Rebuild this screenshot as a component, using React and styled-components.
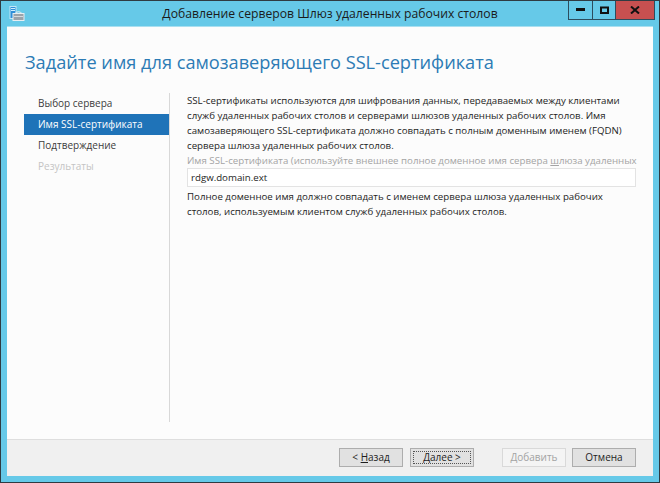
import React from "react";
import styled, { createGlobalStyle } from "styled-components";

const Global = createGlobalStyle`
  html, body { margin: 0; padding: 0; background: #ffffff; }
  body { font-family: "Open Sans", "Noto Sans", "Liberation Sans", sans-serif; }
  * { box-sizing: border-box; }
`;

const Window = styled.div`
  width: 660px;
  height: 483px;
  border: 1px solid #2f3b42;
  background: #66c9e8;
  display: flex;
  flex-direction: column;
  padding: 0 6px 6px 6px;
`;

const TitleBar = styled.div`
  height: 25px;
  display: grid;
  grid-template-columns: 1fr auto 1fr;
  align-items: start;
`;

const IconCell = styled.div`
  display: flex;
  align-items: center;
  height: 25px;
  padding-left: 2px;
`;

const Title = styled.div`
  font-size: 12.2px;
  color: #1b1b1b;
  line-height: 25px;
  white-space: nowrap;
`;

const Controls = styled.div`
  display: flex;
  justify-content: flex-end;
  margin-right: -2px;
`;

const CtrlBtn = styled.div`
  width: ${(p) => p.$w}px;
  height: 19px;
  border: 1px solid #2c4d5e;
  border-top: none;
  margin-left: -1px;
  background: ${(p) => (p.$close ? "#c75050" : "transparent")};
  display: flex;
  align-items: center;
  justify-content: center;
`;

const Client = styled.div`
  flex: 1;
  min-height: 0;
  background: #fcfcfc;
  display: flex;
  flex-direction: column;
  border-top: 1px solid #a9dff0;
`;

const Header = styled.div`
  height: 66px;
  padding: 22px 0 0 18px;
`;

const Heading = styled.h1`
  margin: 0;
  font-weight: 400;
  font-size: 18.2px;
  line-height: 26px;
  color: #2c7bb5;
  white-space: nowrap;
`;

const Body = styled.div`
  flex: 1;
  display: flex;
  padding: 0 17px 17px 17px;
`;

const Nav = styled.nav`
  flex: 0 0 146px;
  width: 146px;
  border-right: 1px solid #d8d8d8;
  display: flex;
  flex-direction: column;
`;

const NavItem = styled.div`
  height: 21px;
  line-height: 21px;
  padding-left: 14px;
  font-size: 10px;
  white-space: nowrap;
  color: ${(p) => (p.$active ? "#ffffff" : p.$disabled ? "#c4c4c4" : "#3c3c3c")};
  background: ${(p) => (p.$active ? "#1f73b8" : "transparent")};
`;

const Content = styled.div`
  flex: 1;
  min-width: 0;
  padding-left: 17px;
  font-size: 9.7px;
  color: #1e1e1e;
`;

const Para = styled.p`
  margin: 0;
  line-height: 15px;
  white-space: nowrap;
`;

const FieldLabel = styled.div`
  margin-top: 1px;
  line-height: 14px;
  color: #a4a4a4;
  white-space: nowrap;
`;

const TextInput = styled.div`
  height: 19px;
  border: 1px solid #e3e3e3;
  background: #ffffff;
  line-height: 17px;
  padding-left: 3px;
  color: #1e1e1e;
`;

const Note = styled(Para)`
  margin-top: 2px;
`;

const Footer = styled.div`
  height: 37px;
  border-top: 1px solid #dedede;
  background: #f0f0f0;
  display: flex;
  align-items: center;
  justify-content: flex-end;
  padding: 0 17px 1px 0;
`;

const Btn = styled.div`
  width: 64px;
  height: 19px;
  margin-left: ${(p) => p.$gap || 0}px;
  border: 1px solid ${(p) => (p.$disabled ? "#d9d9d9" : "#adadad")};
  background: ${(p) => (p.$disabled ? "#f4f4f4" : "#e1e1e1")};
  color: ${(p) => (p.$disabled ? "#a3a3a3" : "#1e1e1e")};
  font-size: 10px;
  display: flex;
  align-items: center;
  justify-content: center;
  position: relative;
  padding-bottom: 1px;
`;

const Focus = styled.span`
  position: absolute;
  inset: 2px;
  border: 1px dotted #555;
`;

function AppIcon() {
  return (
    <svg width="16" height="16" viewBox="0 0 16 16">
      <rect x="1" y="0.5" width="6" height="12" fill="#2f8fd8" stroke="#bfe6f7" strokeWidth="1" />
      <rect x="2" y="2" width="4" height="1" fill="#cfeefc" />
      <rect x="2" y="4" width="4" height="1" fill="#cfeefc" />
      <rect x="4" y="7.5" width="11" height="7" fill="#9aa3ab" stroke="#e8eef2" strokeWidth="1" />
      <path d="M6 7.5 Q9.5 4 13 7.5" fill="none" stroke="#e8eef2" strokeWidth="1" />
      <rect x="5" y="10" width="9" height="1" fill="#d4dade" />
    </svg>
  );
}

export default function App() {
  return (
    <>
      <Global />
      <Window>
        <TitleBar>
          <IconCell>
            <AppIcon />
          </IconCell>
          <Title>Добавление серверов Шлюз удаленных рабочих столов</Title>
          <Controls>
            <CtrlBtn $w={25}>
              <svg width="9" height="4" viewBox="0 0 9 4">
                <rect x="0" y="0" width="9" height="3" fill="#111" />
              </svg>
            </CtrlBtn>
            <CtrlBtn $w={24}>
              <svg width="9" height="8" viewBox="0 0 9 8">
                <rect x="1" y="1.5" width="7" height="5.5" fill="none" stroke="#111" strokeWidth="2" />
              </svg>
            </CtrlBtn>
            <CtrlBtn $w={40} $close>
              <svg width="10" height="8" viewBox="0 0 10 8">
                <path d="M1 0.5 L9 7.5 M9 0.5 L1 7.5" stroke="#111" strokeWidth="2" />
              </svg>
            </CtrlBtn>
          </Controls>
        </TitleBar>
        <Client>
          <Header>
            <Heading>Задайте имя для самозаверяющего SSL-сертификата</Heading>
          </Header>
          <Body>
            <Nav>
              <NavItem>Выбор сервера</NavItem>
              <NavItem $active>Имя SSL-сертификата</NavItem>
              <NavItem>Подтверждение</NavItem>
              <NavItem $disabled>Результаты</NavItem>
            </Nav>
            <Content>
              <Para>
                SSL-сертификаты используются для шифрования данных, передаваемых между клиентами
                <br />
                служб удаленных рабочих столов и серверами шлюзов удаленных рабочих столов. Имя
                <br />
                самозаверяющего SSL-сертификата должно совпадать с полным доменным именем (FQDN)
                <br />
                сервера шлюза удаленных рабочих столов.
              </Para>
              <FieldLabel>
                Имя SSL-сертификата (используйте внешнее полное доменное имя сервера <u>ш</u>люза удаленных
              </FieldLabel>
              <TextInput>rdgw.domain.ext</TextInput>
              <Note>
                Полное доменное имя должно совпадать с именем сервера шлюза удаленных рабочих
                <br />
                столов, используемым клиентом служб удаленных рабочих столов.
              </Note>
            </Content>
          </Body>
          <Footer>
            <Btn>
              &lt;&nbsp;<u>Н</u>азад
            </Btn>
            <Btn $gap={7}>
              <Focus />
              <u>Д</u>алее &gt;
            </Btn>
            <Btn $gap={28} $disabled>
              Добавить
            </Btn>
            <Btn $gap={6}>Отмена</Btn>
          </Footer>
        </Client>
      </Window>
    </>
  );
}
